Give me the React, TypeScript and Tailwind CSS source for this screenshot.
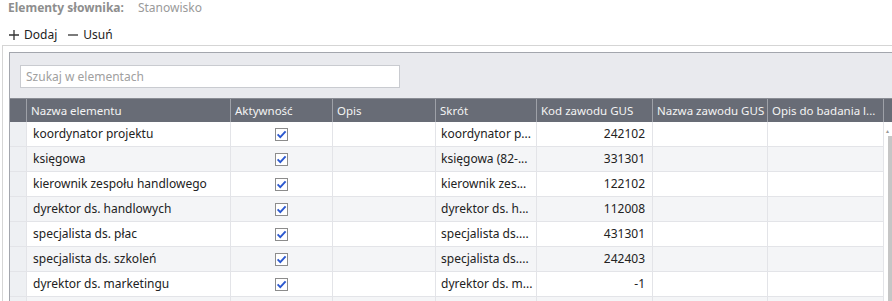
import React from 'react';

interface Row {
  name: string;
  active: boolean;
  opis: string;
  skrot: string;
  kod: string;
}

const rows: Row[] = [
  { name: 'koordynator projektu', active: true, opis: '', skrot: 'koordynator p...', kod: '242102' },
  { name: 'księgowa', active: true, opis: '', skrot: 'księgowa (82-...', kod: '331301' },
  { name: 'kierownik zespołu handlowego', active: true, opis: '', skrot: 'kierownik zes...', kod: '122102' },
  { name: 'dyrektor ds. handlowych', active: true, opis: '', skrot: 'dyrektor ds. h...', kod: '112008' },
  { name: 'specjalista ds. płac', active: true, opis: '', skrot: 'specjalista ds....', kod: '431301' },
  { name: 'specjalista ds. szkoleń', active: true, opis: '', skrot: 'specjalista ds....', kod: '242403' },
  { name: 'dyrektor ds. marketingu', active: true, opis: '', skrot: 'dyrektor ds. m...', kod: '-1' },
];

const headers = [
  { label: 'Nazwa elementu', w: 'w-[204px]' },
  { label: 'Aktywność', w: 'w-[102px]' },
  { label: 'Opis', w: 'w-[103px]' },
  { label: 'Skrót', w: 'w-[101px]' },
  { label: 'Kod zawodu GUS', w: 'w-[116px]' },
  { label: 'Nazwa zawodu GUS', w: 'w-[115px]' },
  { label: 'Opis do badania l...', w: 'w-[116px]' },
];

function Checkbox() {
  return (
    <div className="w-[13px] h-[13px] border border-[#8c8c8c] bg-white flex items-center justify-center">
      <svg width="11" height="11" viewBox="0 0 11 11">
        <path d="M1.6 5.4 L4.3 8.1 L9.6 2.4" fill="none" stroke="#2a57cf" strokeWidth="1.9" />
      </svg>
    </div>
  );
}

function DataRow({ row, idx }: { row?: Row; idx: number }) {
  const bg = idx % 2 === 0 ? 'bg-white' : 'bg-[#f4f5f7]';
  const cell = 'h-full border-r border-[#e3e4e8] flex items-center shrink-0';
  return (
    <div className={`flex h-[25px] border-b border-[#e3e4e8] ${bg}`}>
      <div className={`${cell} w-[17px] bg-[#eef0f3] border-[#dcdee3]`} />
      <div className={`${cell} w-[204px] pl-[6px]`}>{row?.name}</div>
      <div className={`${cell} w-[102px] justify-center`}>{row?.active && <Checkbox />}</div>
      <div className={`${cell} w-[103px]`}>{row?.opis}</div>
      <div className={`${cell} w-[101px] pl-[5px] whitespace-nowrap overflow-hidden`}>{row?.skrot}</div>
      <div className={`${cell} w-[116px] justify-end pr-[7px]`}>{row?.kod}</div>
      <div className={`${cell} w-[115px]`} />
      <div className={`${cell} w-[116px] border-[#b9bbc0]`} />
      <div className="flex-1 h-full bg-white" />
    </div>
  );
}

export default function App() {
  return (
    <div
      className="w-[892px] h-[301px] overflow-hidden bg-white text-[12px] text-[#222]"
      style={{ fontFamily: '"Noto Sans", "Open Sans", sans-serif' }}
    >
      <div className="h-[16px] flex items-center gap-[14px] pl-[8px]">
        <span className="font-bold text-[#8e8e8e]">Elementy słownika:</span>
        <span className="text-[#9a9a9a]">Stanowisko</span>
      </div>
      <div className="h-[29px] pt-[9px] flex items-center pl-[8px] gap-[10px] text-[#222]">
        <div className="flex items-center gap-[4px]">
          <svg width="12" height="12" viewBox="0 0 12 12">
            <path d="M6 1 V11 M1 6 H11" stroke="#333" strokeWidth="1.3" />
          </svg>
          <span>Dodaj</span>
        </div>
        <div className="flex items-center gap-[4px]">
          <svg width="12" height="12" viewBox="0 0 12 12">
            <path d="M1 6 H11" stroke="#333" strokeWidth="1.3" />
          </svg>
          <span>Usuń</span>
        </div>
      </div>
      <div className="ml-[2px] border-t border-l border-[#d5d5d5] pl-[6px] pt-[6px] h-full">
        <div className="border-t border-l border-[#a3a6ad] bg-[#e9eaee] h-full">
          <div className="px-[10px] pt-[12px] pb-[10px]">
            <div className="w-[380px] h-[23px] bg-white border border-[#c9cbd0] flex items-center pl-[5px] text-[#a0a0a0]">
              Szukaj w elementach
            </div>
          </div>
          <div className="bg-white">
            <div className="flex h-[24px] bg-[#686c76] text-[11.5px] text-[#f4f4f4] border-t border-[#8a8d94]">
              <div className="w-[17px] shrink-0 border-r border-[#9ea1a8]" />
              {headers.map((h) => (
                <div
                  key={h.label}
                  className={`${h.w} shrink-0 border-r border-[#9ea1a8] flex items-center pl-[4px] whitespace-nowrap overflow-hidden`}
                >
                  {h.label}
                </div>
              ))}
              <div className="flex-1" />
            </div>
            <div className="flex">
              <div className="w-[874px] shrink-0">
                {rows.map((r, i) => (
                  <DataRow key={i} row={r} idx={i} />
                ))}
                <DataRow idx={rows.length} />
              </div>
              <div className="flex-1 flex flex-col items-end pt-[6px]">
                <div className="w-[4px] text-[6px] leading-[6px] text-[#999] self-center">▴</div>
                <div className="w-[4px] h-[200px] bg-[#c6c6c6] mt-[2px]" />
              </div>
            </div>
          </div>
        </div>
      </div>
    </div>
  );
}
